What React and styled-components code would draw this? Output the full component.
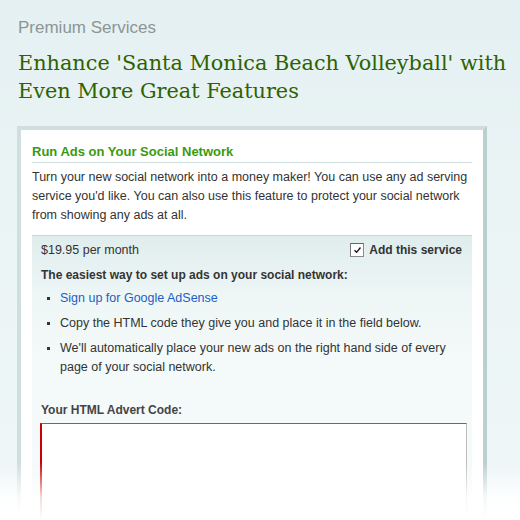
import React from "react";
import styled, { createGlobalStyle } from "styled-components";

const GlobalStyle = createGlobalStyle`
  html, body { margin: 0; padding: 0; }
  body {
    background: linear-gradient(180deg, #e4f0f2 0px, #ebf4f5 200px, #eef6f7 520px);
    font-family: "Liberation Sans", Arial, sans-serif;
    color: #333;
    min-height: 520px;
    overflow: hidden;
  }
`;

const Page = styled.div`
  padding: 18px 33px 0 17px;
  height: 520px;
  box-sizing: border-box;
  overflow: hidden;
`;

const Kicker = styled.div`
  font-size: 17px;
  line-height: 20px;
  color: #8d9595;
  padding-left: 1px;
`;

const Title = styled.h1`
  margin: 11px 0 0 1px;
  font-family: "DejaVu Serif", Georgia, serif;
  font-weight: normal;
  font-size: 20.8px;
  line-height: 28px;
  color: #2f6200;
  width: 505px;
`;

const Panel = styled.div`
  margin-top: 21px;
  background: #fff;
  border: 4px solid #cfdfdf;
  border-right-color: #bccfcf;
  border-bottom: none;
  padding: 14px 11px 0 11px;
`;

const SectionTitle = styled.h2`
  margin: 0;
  font-size: 13px;
  line-height: 16px;
  font-weight: bold;
  color: #3a9a0e;
  padding-bottom: 2px;
  border-bottom: 1px solid #cfdede;
`;

const Intro = styled.p`
  margin: 5px 0 10px;
  font-size: 12.5px;
  line-height: 19px;
  color: #333;
`;

const ServiceBox = styled.div`
  border-top: 1px solid #c8d8d8;
  background: linear-gradient(180deg, #e0eded 0px, #eef6f6 60px, #f4f9f9 120px, #f5fafa 100%);
  padding: 5px 5px 0 9px;
`;

const PriceRow = styled.div`
  display: flex;
  justify-content: space-between;
  align-items: center;
  font-size: 12.5px;
  line-height: 18px;
  padding-right: 5px;
`;

const AddLabel = styled.label`
  display: flex;
  align-items: center;
  gap: 5px;
  font-weight: bold;
  font-size: 12px;
  color: #333;
`;

const Check = styled.span`
  width: 12px;
  height: 12px;
  border: 1px solid #8a8a8a;
  border-top-color: #666;
  border-left-color: #777;
  background: #fff;
  display: flex;
  align-items: center;
  justify-content: center;
`;

const Lead = styled.div`
  margin-top: 7px;
  font-weight: bold;
  font-size: 12px;
  line-height: 18px;
`;

const List = styled.ul`
  margin: 5px 0 0;
  padding: 0 0 0 19px;
  list-style: square;
  font-size: 12.5px;
  line-height: 19px;
  & li { margin-bottom: 6px; padding-left: 0; }
  & li::marker { font-size: 10px; color: #333; }
`;

const Link = styled.a`
  color: #1b5fc6;
  text-decoration: none;
`;

const FieldLabel = styled.div`
  margin-top: 24px;
  font-weight: bold;
  font-size: 12px;
  line-height: 18px;
  color: #444;
`;

const CodeArea = styled.div`
  margin: 4px 0 0 -1px;
  height: 200px;
  background: #fff;
  border-top: 1px solid #6a6a6a;
  border-left: 2px solid #cc0000;
  border-right: 1px solid #bcbcbc;
`;

const Fade = styled.div`
  position: fixed;
  left: 0;
  right: 0;
  bottom: 0;
  height: 58px;
  background: linear-gradient(180deg, rgba(255,255,255,0) 0%, rgba(255,255,255,0.85) 60%, #fff 100%);
  pointer-events: none;
`;

export default function App() {
  return (
    <>
      <GlobalStyle />
      <Page>
        <Kicker>Premium Services</Kicker>
        <Title>Enhance 'Santa Monica Beach Volleyball' with Even More Great Features</Title>
        <Panel>
          <SectionTitle>Run Ads on Your Social Network</SectionTitle>
          <Intro>
            Turn your new social network into a money maker! You can use any ad serving
            service you'd like. You can also use this feature to protect your social network
            from showing any ads at all.
          </Intro>
          <ServiceBox>
            <PriceRow>
              <span>$19.95 per month</span>
              <AddLabel>
                <Check>
                  <svg width="9" height="8" viewBox="0 0 9 8">
                    <path d="M1.5 4.2 L3.6 6.3 L7.5 1.5" fill="none" stroke="#111" strokeWidth="1.3" />
                  </svg>
                </Check>
                Add this service
              </AddLabel>
            </PriceRow>
            <Lead>The easiest way to set up ads on your social network:</Lead>
            <List>
              <li><Link href="#">Sign up for Google AdSense</Link></li>
              <li>Copy the HTML code they give you and place it in the field below.</li>
              <li>We'll automatically place your new ads on the right hand side of every page of your social network.</li>
            </List>
            <FieldLabel>Your HTML Advert Code:</FieldLabel>
            <CodeArea />
          </ServiceBox>
        </Panel>
      </Page>
      <Fade />
    </>
  );
}
